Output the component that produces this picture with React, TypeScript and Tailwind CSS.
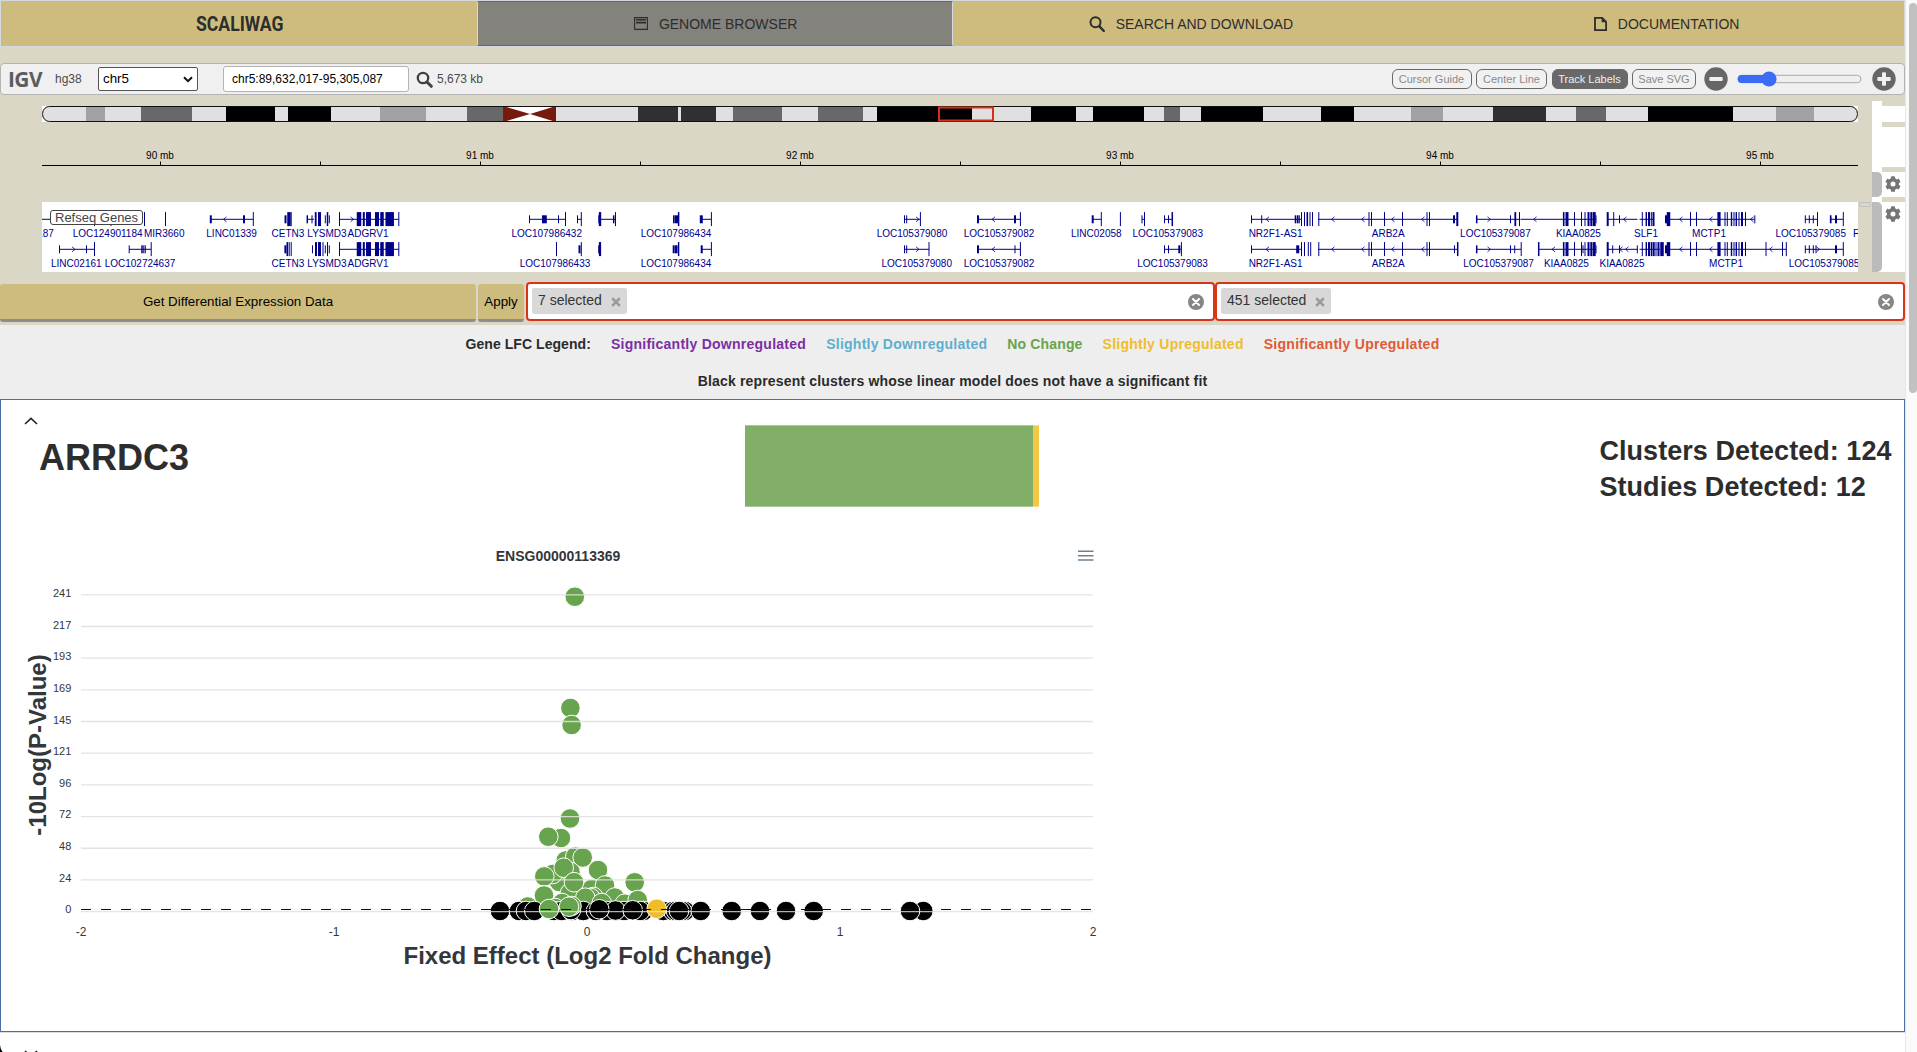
import { ReactNode } from "react";

type Band = [from: number, to: number, fill: string];

const LIGHT = "#e0e0e0";
const GREY = "#a2a2a2";
const MID = "#686868";
const DARK = "#303030";
const BLACK = "#000";

const BANDS: Band[] = [
  [42, 86, LIGHT], [86, 105, GREY], [105, 141, LIGHT], [141, 192, MID], [192, 226, LIGHT],
  [226, 275, BLACK], [275, 288, LIGHT], [288, 331, BLACK], [331, 380, LIGHT], [380, 426, GREY],
  [426, 467, LIGHT], [467, 503, MID], [556, 638, LIGHT], [638, 678, DARK], [678, 681, LIGHT],
  [681, 716, DARK], [716, 733, LIGHT], [733, 782, MID], [782, 818, LIGHT], [818, 863, MID],
  [863, 877, LIGHT], [877, 972, BLACK], [972, 1031, LIGHT], [1031, 1076, BLACK], [1076, 1093, LIGHT],
  [1093, 1144, BLACK], [1144, 1164, LIGHT], [1164, 1180, MID], [1180, 1201, LIGHT], [1201, 1263, BLACK],
  [1263, 1321, LIGHT], [1321, 1354, BLACK], [1354, 1411, LIGHT], [1411, 1443, GREY], [1443, 1493, LIGHT],
  [1493, 1546, DARK], [1546, 1576, LIGHT], [1576, 1606, MID], [1606, 1648, LIGHT], [1648, 1733, BLACK],
  [1733, 1776, LIGHT], [1776, 1814, GREY], [1814, 1858, LIGHT],
];

type Mark = [x: number, width?: number];
type GeneRow = {
  y: number;
  lines: [number, number][];
  tall: Mark[];
  short: Mark[];
  left: number[];
  right: number[];
  labels: [number, string][];
};

const ADGRV: Mark[] = [[339.5], [359, 4.5], [363.8, 2], [368.5, 5], [377, 4], [382, 3.5], [389.7, 8.5], [398.8]];
const ARB2A: Mark[] = [[1369], [1371.5], [1384.5], [1402.5], [1427], [1429.5]];
const KIAA: Mark[] = [[1563.7, 1.6], [1567, 3], [1574.5], [1581.5], [1585], [1588.5, 2], [1591.3, 2], [1594.2, 3]];
const MCTP: Mark[] = [[1668.5, 3.5], [1690.5], [1696.5], [1719, 3.2], [1725], [1727.3], [1731.5, 1.4], [1734], [1736.3, 1.4], [1739], [1742, 2], [1745.5]];

const ROWS: GeneRow[] = [
  {
    y: 219.3,
    lines: [[42, 50], [210.5, 253], [307, 314], [339.5, 399], [529.5, 565], [577, 581], [600, 615], [701, 711], [904.5, 920], [978, 1020], [1092, 1101], [1142, 1144], [1164.5, 1172.5], [1251.5, 1301], [1318, 1458], [1476.5, 1519], [1520.5, 1596], [1607, 1637.5], [1639.5, 1653.5], [1666, 1754.5], [1805, 1817.5], [1830.5, 1843]],
    tall: [[94.5], [111], [144.5], [165.5], [253.3], [289, 3.5], [291.2], [315.7, 1.8], [319.5, 3], [327.5, 1.5], ...ADGRV, [565.5], [581.3], [600, 2.4], [615.5], [678.6, 1.5], [711.4], [920.4], [1020.4], [1101.3], [1120.4], [1144.5], [1172.3, 1.5], [1301.5], [1304.5], [1307.3, 1.6], [1310], [1312.5], [1318.8], ...ARB2A, [1457.3, 2], [1515.3, 1.8], [1519.5], ...KIAA, [1607.7, 2], [1613.7], [1642.3], [1646.3, 1.4], [1649, 2], [1651.3], [1653.5, 2], ...MCTP, [1817.5], [1843.3]],
    short: [[210.8, 2], [244, 2], [285.5, 2], [307.3, 1.5], [312], [325.3], [329.3], [529.5], [543, 2], [545.3, 3], [558.5], [577.5], [598.8, 1], [613.7, 1.5], [673.5], [676.3, 4], [701.3, 3], [904.5], [906.7], [978, 2], [1015, 2], [1092.7, 2], [1142], [1164.5], [1168.5], [1251.5], [1261.7], [1295.5, 1.6], [1297.7, 1.6], [1299.3], [1454, 2], [1476.7, 1.5], [1510.5], [1596], [1619.5], [1666, 2], [1754.8], [1805.3], [1809.3], [1813.3], [1830.7, 1.7], [1836, 2]],
    left: [225, 993.5, 1267.5, 1333, 1363, 1393, 1423, 1535, 1625, 1681, 1711, 1752],
    right: [352, 917.5, 1489],
    labels: [[45.5, "187"], [107.6, "LOC124901184"], [164.2, "MIR3660"], [231.6, "LINC01339"], [288, "CETN3"], [327, "LYSMD3"], [368, "ADGRV1"], [546.7, "LOC107986432"], [676, "LOC107986434"], [912, "LOC105379080"], [999, "LOC105379082"], [1096.3, "LINC02058"], [1167.7, "LOC105379083"], [1275.6, "NR2F1-AS1"], [1388.2, "ARB2A"], [1495.4, "LOC105379087"], [1578.4, "KIAA0825"], [1646, "SLF1"], [1709, "MCTP1"], [1810.7, "LOC105379085"], [1856, "F"]],
  },
  {
    y: 249.3,
    lines: [[59.5, 94], [129, 151], [339.5, 399], [701, 711], [904.5, 929], [978, 1020], [1164.5, 1181], [1251.5, 1301], [1318, 1458], [1476.5, 1521], [1538.5, 1596], [1607, 1637.5], [1639.5, 1660], [1666, 1786], [1805, 1843]],
    tall: [[94.5], [151.2], [287.3, 1.6], [289.2], [291.2], [316, 2], [319.5, 3], [323], [327.5], ...ADGRV, [556.5], [581.3], [600, 2.2], [678.6, 1.4], [711.4], [929], [1020.4], [1181.4], [1301.5], [1304.5], [1308.3], [1310.7], [1318.8], ...ARB2A, [1457.7, 1.5], [1521.2], [1538.7, 1.5], ...KIAA, [1607.7, 2], [1642.3], [1646.3, 1.4], [1649, 2], [1651.5, 1.6], [1653.7, 2], [1656], [1658.5, 2], [1662, 3.5], ...MCTP, [1766], [1782.5], [1786.3], [1843.3]],
    short: [[59.5], [86.5], [129.2], [142, 1.5], [143.8], [145.3], [285.4, 2], [312.5], [325.3], [329.3], [579.5, 2], [598.7, 1], [673.7, 2], [676.3, 2.6], [701.7, 2], [904.5], [906.7], [978, 2], [1015], [1164.5], [1168.5], [1179.3, 2], [1251.5], [1297.7, 3], [1454.5], [1476.7, 1.5], [1510.5], [1514.7], [1583], [1596], [1612.7], [1619.5], [1637.3], [1666, 2], [1805.3], [1809.3], [1813.3], [1816], [1836, 2]],
    left: [993.5, 1267.5, 1333, 1363, 1393, 1423, 1553.5, 1621, 1627, 1681, 1711, 1771],
    right: [73.5, 917.5, 1489, 1818],
    labels: [[76.3, "LINC02161"], [140, "LOC102724637"], [288, "CETN3"], [327, "LYSMD3"], [368, "ADGRV1"], [555, "LOC107986433"], [676, "LOC107986434"], [916.7, "LOC105379080"], [999, "LOC105379082"], [1172.6, "LOC105379083"], [1275.6, "NR2F1-AS1"], [1388.2, "ARB2A"], [1498.6, "LOC105379087"], [1566.4, "KIAA0825"], [1622, "KIAA0825"], [1726, "MCTP1"], [1824, "LOC105379085"]],
  },
];

const GREEN = "#68a34d";
const YELLOW = "#efbd2b";

type Dot = [x: number, y: number, fill: string];
const g = (x: number, y: number): Dot => [x, y, GREEN];
const k = (x: number, y = 911): Dot => [x, y, BLACK];

const DOTS: Dot[] = [
  g(574.8, 596.7), g(570.4, 708), g(571.6, 725), g(570, 818.5), g(561, 838), g(548.3, 836.7),
  g(565.7, 860.5), g(575.3, 856.5), g(582.7, 857.5), g(598, 870), g(559.3, 882), g(552.7, 874), g(544.3, 876.4),
  g(570.5, 872), g(563.7, 867.7), g(591.7, 889), g(570, 893), g(574, 882.2),
  g(605, 885.5), g(634.7, 882.3), g(544, 895.5), g(614.7, 897.5), g(593.5, 897), g(590.5, 898),
  g(562, 903), g(555, 908), g(585.3, 897.7), g(601.7, 903), g(624.7, 903.7), g(637.7, 900), g(527.7, 906.5),
  k(500), k(519), k(526), k(534.3), k(554), k(561.7), k(572), k(583.3), k(596), k(606.7), k(643.5), k(640),
  k(624), k(615.5, 910.5), k(632.7, 910.3), k(663.3), k(673), k(676), k(685), k(682), k(679), k(700.7), k(731.7),
  k(760), k(786), k(813.7), k(923.3), k(910), k(571, 910),
  g(549, 909), g(571.5, 906), g(569, 906.7), k(599.3, 909.3), [656.7, 908.7, YELLOW],
];

const Y_TICKS = ["241", "217", "193", "169", "145", "121", "96", "72", "48", "24", "0"];
const X_TICKS = ["-2", "-1", "0", "1", "2"];

function NavItem({ active, icon, children }: { active?: boolean; icon?: ReactNode; children: ReactNode }) {
  return (
    <a
      className={
        active
          ? "flex h-full items-center justify-center gap-[11px] border-x border-y border-x-[#d5d8dc] border-y-[#616675] bg-[#84827c] pl-[2px]"
          : "flex h-full items-center justify-center gap-[11px] bg-[#cdbc7e] pl-px"
      }
    >
      {icon}
      {children}
    </a>
  );
}

function WindowIcon() {
  return (
    <svg width="14" height="13" viewBox="0 0 14 13" className="text-[#2d2d2d]">
      <path d="M.6.6h12.8v11.8H.6z" fill="none" stroke="currentColor" strokeWidth="1.1" />
      <path d="M2 2h10v1.6H2zM2 4.8h10v1.6H2z" fill="currentColor" />
    </svg>
  );
}

function SearchIcon() {
  return (
    <svg width="16" height="16" viewBox="0 0 16 16" fill="none" stroke="#2d2d2d">
      <circle cx="6.5" cy="6.3" r="5" strokeWidth="2" />
      <path d="m10.2 10.2 4.6 4.8" strokeWidth="2.4" strokeLinecap="round" />
    </svg>
  );
}

function DocumentIcon() {
  return (
    <svg width="13" height="14" viewBox="0 0 13 14">
      <path d="M1 .9h7.2l3.9 3.9v8.3H1z" fill="none" stroke="#2d2d2d" strokeWidth="1.8" />
      <path d="M7.6 1v4.3h4.6z" fill="#2d2d2d" />
    </svg>
  );
}

function GearIcon() {
  return (
    <svg width="16" height="16" viewBox="0 0 512 512" fill="#757575">
      <path d="M487 316l-43-25c4-23 4-47 0-70l43-25c5-3 7-8 6-14-11-36-30-69-55-96-4-4-10-5-14-2l-43 24c-18-15-39-27-61-35V24c0-6-4-11-9-12-37-8-75-8-110 0-6 1-10 6-10 12v49c-22 8-43 20-61 35L88 84c-5-3-11-2-15 2-25 27-44 60-55 96-2 5 1 11 5 14l43 25c-4 23-4 47 0 70l-43 25c-5 3-7 8-5 14 11 36 30 68 55 96 4 4 10 5 15 2l42-25c18 16 39 28 61 36v49c0 6 4 11 10 12 36 8 74 8 110 0 5-1 9-6 9-12v-49c22-8 43-20 61-36l43 25c5 3 11 2 14-2 25-28 44-60 55-96 2-6 0-11-6-14zM256 336a80 80 0 1 1 0-160 80 80 0 0 1 0 160z" />
    </svg>
  );
}

function ToolbarButton({ on, width, children }: { on?: boolean; width: string; children: ReactNode }) {
  return (
    <button
      className={
        (on ? "bg-[#696969] text-[#efefef] " : "bg-[#f1f1f1] text-[#8a8a8a] ") +
        width +
        " h-5 rounded-[6px] border border-[#696969] text-[11px] leading-[16px]"
      }
    >
      {children}
    </button>
  );
}

function RoundButton({ plus }: { plus?: boolean }) {
  return (
    <svg width="24" height="24" viewBox="0 0 24 24">
      <circle cx="12" cy="12" r="11.7" fill="#666" />
      <rect x="5.3" y="10" width="13.4" height="4" rx="1" fill="#f0f0f0" />
      {plus && <rect x="10" y="5.3" width="4" height="13.4" rx="1" fill="#f0f0f0" />}
    </svg>
  );
}

function Toolbar() {
  return (
    <div className="flex h-8 w-[1905px] items-center rounded-[4px] border border-[#b3b3b3] bg-[#f0f0f0] text-xs text-[#4a4a4a]">
      <div className="w-[46px] pb-[2px] pl-[7px] font-['Open_Sans'] text-[22px] leading-[28px] font-bold tracking-[-0.6px] text-[#5d5d5d]">
        <span className="inline-block origin-left scale-x-[0.95]">IGV</span>
      </div>
      <span className="w-[51px] pl-2">hg38</span>
      <div className="flex h-6 w-[100px] items-center justify-between rounded-[2px] border border-[#555] bg-white pr-1 pl-1 text-[13.33px] text-black">
        <span>chr5</span>
        <svg width="10" height="7" viewBox="0 0 10 7">
          <path d="m1 1.2 4 4 4-4" fill="none" stroke="#111" strokeWidth="2" />
        </svg>
      </div>
      <div className="ml-[25px] flex h-[26px] w-[186px] items-center rounded-[3px] border border-[#b3b3b3] bg-white pl-2 text-black">
        chr5:89,632,017-95,305,087
      </div>
      <svg width="17" height="17" viewBox="0 0 17 17" fill="none" stroke="#404040" className="ml-[7px]">
        <circle cx="7" cy="7" r="5.2" strokeWidth="2.3" />
        <path d="m11 11 4.3 4.3" strokeWidth="3" strokeLinecap="round" />
      </svg>
      <span className="ml-1">5,673 kb</span>
      <div className="ml-auto flex items-center gap-[4.5px]">
        <ToolbarButton width="w-[80px]">Cursor Guide</ToolbarButton>
        <ToolbarButton width="w-[71px]">Center Line</ToolbarButton>
        <ToolbarButton on width="w-[76px]">Track Labels</ToolbarButton>
        <ToolbarButton width="w-[64px]">Save SVG</ToolbarButton>
      </div>
      <div className="mr-[8px] ml-[8px] flex items-center">
        <RoundButton />
        <svg width="125" height="16" viewBox="0 0 125 16" className="mr-[10px] ml-[9px]">
          <rect x="1" y="4.3" width="123" height="7.4" rx="3.7" fill="#efefef" stroke="#a9a9a9" />
          <rect x=".7" y="4" width="34" height="8" rx="4" fill="#3b6cf6" />
          <circle cx="32" cy="8" r="7.6" fill="#3b6cf6" />
        </svg>
        <RoundButton plus />
      </div>
    </div>
  );
}

function Ideogram() {
  return (
    <svg width="1816" height="16" viewBox="42 106 1816 16" className="block bg-white">
      <clipPath id="chromosome">
        <rect x="42" y="106" width="1816" height="16" rx="7" />
      </clipPath>
      <g clipPath="url(#chromosome)">
        {BANDS.map(([from, to, fill]) => (
          <rect key={from} x={from} y="106" width={to - from} height="16" fill={fill} />
        ))}
        <path d="M503 106 530 114 503 122zM556 106 530 114 556 122z" fill="#771a0e" />
      </g>
      <rect x="42.6" y="106.5" width="1814.8" height="15" rx="7" fill="none" stroke="#111" />
      <rect x="939" y="107.5" width="54" height="13" fill="none" stroke="#d8301a" strokeWidth="2" />
    </svg>
  );
}

function Ruler() {
  return (
    <svg width="1816" height="80" viewBox="42 122 1816 80" className="block">
      <path d="M42 165.5H1858" stroke="#000" />
      {Array.from({ length: 11 }, (_, i) => (
        <path key={i} d={`M${160.5 + i * 160} 161.5v4`} stroke="#000" />
      ))}
      {[90, 91, 92, 93, 94, 95].map((mb, i) => (
        <text key={mb} x={160 + i * 320} y="159" textAnchor="middle" fontSize="10">
          {mb} mb
        </text>
      ))}
    </svg>
  );
}

function GeneTrack() {
  return (
    <div className="relative h-[70px] w-[1816px] overflow-hidden bg-white">
      <svg width="1816" height="70" viewBox="42 202 1816 70" className="block" fill="#00008b">
        {ROWS.map((row) => (
          <g key={row.y}>
            {row.lines.map(([a, b]) => (
              <rect key={a} x={a} y={row.y - 0.5} width={b - a} height="1" />
            ))}
            {row.tall.map(([x, w = 1]) => (
              <rect key={x} x={x - w / 2} y={row.y - 7.2} width={w} height="14" />
            ))}
            {row.short.map(([x, w = 1]) => (
              <rect key={x} x={x - w / 2} y={row.y - 4} width={w} height="8" />
            ))}
            {row.left.map((x) => (
              <path key={x} d={`M${x + 1.5} ${row.y - 2.5}l-3 2.5 3 2.5`} fill="none" stroke="#00008b" strokeWidth=".8" />
            ))}
            {row.right.map((x) => (
              <path key={x} d={`M${x - 1.5} ${row.y - 2.5}l3 2.5-3 2.5`} fill="none" stroke="#00008b" strokeWidth=".8" />
            ))}
            {row.labels.map(([x, name]) => (
              <text key={x} x={x} y={row.y + 17.5} textAnchor="middle" fontSize="10">
                {name}
              </text>
            ))}
          </g>
        ))}
      </svg>
      <div className="absolute top-2 left-2 h-[15px] w-[93px] rounded-[3px] border border-[#444] bg-white pl-1 text-[13px] leading-[13px] text-[#444]">
        Refseq Genes
      </div>
    </div>
  );
}

function Browser() {
  return (
    <div className="flex h-[187px] pl-[42px]">
      <div className="flex flex-col pt-[11px]">
        <Ideogram />
        <Ruler />
        <GeneTrack />
      </div>
      <div className="w-[14px] pt-[107px] pl-px">
        <div className="h-[5px] w-[12px] rounded-[2px] border border-[#c0c0c0]" />
      </div>
      <div className="flex w-[10px] flex-col pt-[6px]">
        <div className="h-[71px] bg-white" />
        <div className="bg-white pb-[5px]">
          <div className="h-[25px] rounded-r-[5px] bg-[#bbb]" />
        </div>
        <div className="bg-white">
          <div className="h-[70px] rounded-r-[5px] bg-[#bbb]" />
        </div>
      </div>
      <div className="flex w-[23px] flex-col gap-[5px] pt-[11px]">
        <div className="h-4 bg-white" />
        <div className="h-10 bg-white" />
        <div className="flex h-[25px] items-start justify-center bg-white pt-1 pr-[2px]">
          <GearIcon />
        </div>
        <div className="flex h-[70px] items-start justify-center bg-white pt-1 pr-[2px]">
          <GearIcon />
        </div>
      </div>
    </div>
  );
}

function MultiSelect({ width, label }: { width: string; label: string }) {
  return (
    <div className={width + " flex h-[39px] items-start rounded-[4px] border-2 border-[#d93318] bg-white pt-1 pr-[9px] pl-1"}>
      <div className="flex h-[26px] items-center gap-[9px] rounded-[2px] bg-[#d8d8d8] pr-[6px] pl-[6px] text-sm leading-6 text-[#333]">
        <span className="-mt-[2px]">{label}</span>
        <svg width="10" height="10" viewBox="0 0 10 10" className="mt-[2px]">
          <path d="m1.2 1.2 7.6 7.6M8.8 1.2 1.2 8.8" stroke="#999" strokeWidth="2.6" />
        </svg>
      </div>
      <svg width="16" height="16" viewBox="0 0 16 16" className="mt-[6px] ml-auto">
        <circle cx="8" cy="8" r="8" fill="#868686" />
        <path d="m5 5 6 6M11 5l-6 6" stroke="#fff" strokeWidth="2" strokeLinecap="round" />
      </svg>
    </div>
  );
}

function Actions() {
  return (
    <div className="flex h-[43px] items-start">
      <button className="mt-[2px] h-[38px] w-[476px] rounded-[3px] border-b-[3px] border-[#8d8d8d] bg-[#cdbc7e] text-[13.33px] text-black">
        Get Differential Expression Data
      </button>
      <button className="mt-[2px] ml-[2px] h-[38px] w-[46px] rounded-[3px] border-b-[3px] border-[#8d8d8d] bg-[#cdbc7e] text-[13.33px] text-black">
        Apply
      </button>
      <div className="ml-[2px] flex">
        <MultiSelect width="w-[689px]" label="7 selected" />
        <MultiSelect width="w-[690px]" label="451 selected" />
      </div>
    </div>
  );
}

function Legend() {
  return (
    <div className="flex h-[74px] w-[1905px] flex-col items-center bg-[#eee] pt-[9px] text-sm font-bold text-[#2b2b2b]">
      <div className="flex gap-5">
        <span className="tracking-[0.06px]">Gene LFC Legend:</span>
        <span className="tracking-[0.26px] text-[#7b2fa5]">Significantly Downregulated</span>
        <span className="tracking-[0.25px] text-[#5eafcf]">Slightly Downregulated</span>
        <span className="tracking-[0.16px] text-[#68a34d]">No Change</span>
        <span className="tracking-[0.25px] text-[#efbd2b]">Slightly Upregulated</span>
        <span className="tracking-[0.28px] text-[#e05a35]">Significantly Upregulated</span>
      </div>
      <div className="mt-[17px] tracking-[0.165px]">
        Black represent clusters whose linear model does not have a significant fit
      </div>
    </div>
  );
}

function VolcanoPlot() {
  return (
    <svg width="1100" height="440" viewBox="1 540 1100 440" className="block" fill="#33373b">
      <text x="558" y="561" textAnchor="middle" fontSize="14" fontWeight="700">
        ENSG00000113369
      </text>
      <path d="M1078 551.2h15.5M1078 555.7h15.5M1078 560h15.5" stroke="#6e8192" strokeWidth="1.5" />
      {DOTS.map(([x, y, fill], i) => (
        <circle key={i} cx={x} cy={y} r="9.8" fill={fill} stroke="#fff" strokeWidth="1" />
      ))}
      {Y_TICKS.map((label, i) => (
        <g key={label}>
          <path d={`M81 ${594.8 + i * 31.68}H1093`} stroke="#e0e0e0" strokeOpacity={i === 10 ? 0.8 : 0.9} strokeWidth="1.3" />
          <text x="71.3" y={597.2 + i * 31.6} textAnchor="end" fontSize="11">
            {label}
          </text>
        </g>
      ))}
      <path d="M81 909.5H1093" stroke="#111" strokeDasharray="10 10" />
      {X_TICKS.map((label, i) => (
        <text key={label} x={81 + i * 253} y="936" textAnchor="middle" fontSize="12">
          {label}
        </text>
      ))}
      <text x="587.5" y="964" textAnchor="middle" fontSize="24" fontWeight="700">
        Fixed Effect (Log2 Fold Change)
      </text>
      <text transform="translate(46 745) rotate(-90)" textAnchor="middle" fontSize="24" fontWeight="700">
        -10Log(P-Value)
      </text>
    </svg>
  );
}

function GeneCard() {
  return (
    <section className="h-[633px] w-[1905px] border border-[#4b6da8] bg-white text-[#2d2d2d]">
      <div className="flex h-[140px]">
        <div className="w-[744px] pt-[17px]">
          <svg width="14" height="8" viewBox="0 0 14 8" className="ml-[23px]">
            <path d="m1 7 6-5.6L13 7" fill="none" stroke="#222" strokeWidth="1.6" />
          </svg>
          <h1 className="mt-[11px] ml-[38px] text-4xl leading-[44px] font-bold">ARRDC3</h1>
        </div>
        <div className="mt-[25px] flex h-[82px] w-[294px]">
          <div className="w-[288px] border-y border-[#a8c897] bg-[#81af67]" />
          <div className="w-[6px] border-y border-[#f6dc8c] bg-[#f3c847]" />
        </div>
        <div className="mt-[33px] ml-[560.5px] text-[27px] leading-9 font-bold tracking-[0.04px] whitespace-nowrap">
          <div>Clusters Detected: 124</div>
          <div>Studies Detected: 12</div>
        </div>
      </div>
      <VolcanoPlot />
    </section>
  );
}

export default function App() {
  return (
    <div className="flex h-[1052px] w-[1917px] overflow-hidden bg-white font-['Liberation_Sans',Arial,sans-serif]">
      <main className="w-[1905px] shrink-0">
        <div className="h-[325px] bg-[#dad7c7]">
          <nav className="grid h-[47px] grid-cols-4 border border-[#d5d8dc] text-sm text-[#2d2d2d]">
            <NavItem>
              <span className="inline-block scale-x-[0.88] font-['Roboto'] text-xl font-bold">SCALIWAG</span>
            </NavItem>
            <NavItem active icon={<WindowIcon />}>GENOME BROWSER</NavItem>
            <NavItem icon={<SearchIcon />}>SEARCH AND DOWNLOAD</NavItem>
            <NavItem icon={<DocumentIcon />}>DOCUMENTATION</NavItem>
          </nav>
          <div className="pt-4">
            <Toolbar />
          </div>
          <Browser />
          <Actions />
        </div>
        <Legend />
        <GeneCard />
        <div className="relative h-5 border-t border-[#ddd] pt-[17px]">
          <svg width="14" height="8" viewBox="0 0 14 8" className="ml-[24px]">
            <path d="m1 1 6 5.6L13 1" fill="none" stroke="#222" strokeWidth="1.6" />
          </svg>
          <svg width="4" height="8" viewBox="0 0 4 8" className="absolute top-3 left-0">
            <path d="M0 0Q.5 6 4 8H0z" />
          </svg>
        </div>
      </main>
      <aside className="h-full w-3 border-l border-[#e6e6e6] bg-[#fafafa] pt-[3px] pl-[3px]">
        <div className="h-[390px] w-2 rounded-full bg-[#c1c1c1]" />
      </aside>
    </div>
  );
}
